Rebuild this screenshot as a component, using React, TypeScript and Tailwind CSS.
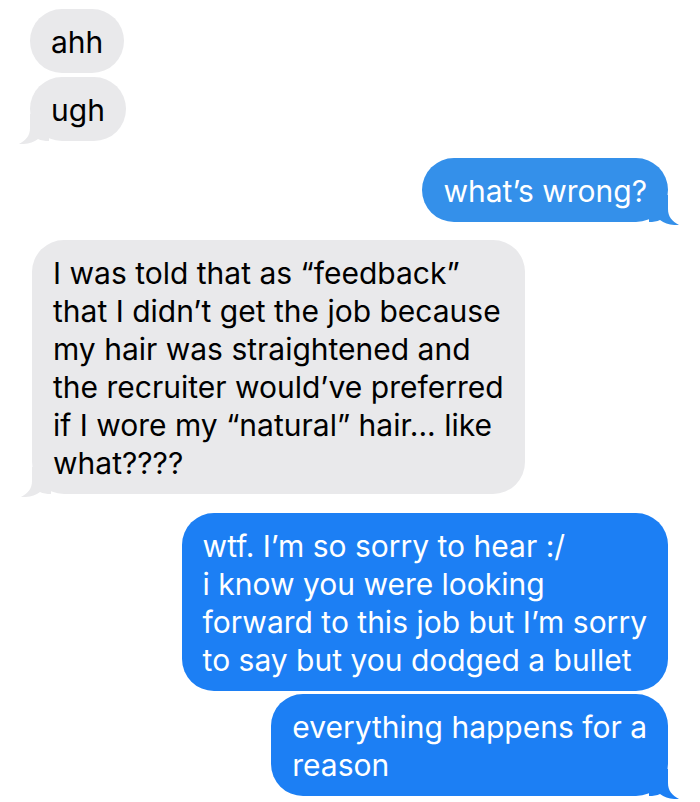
import React from "react";

type Msg = { from: "them" | "me"; lines: string[]; tail?: boolean; tone?: "light" | "dark" };

const messages: Msg[] = [
  { from: "them", lines: ["ahh"] },
  { from: "them", lines: ["ugh"], tail: true },
  { from: "me", lines: ["what’s wrong?"], tail: true, tone: "light" },
  {
    from: "them",
    lines: [
      "I was told that as “feedback”",
      "that I didn’t get the job because",
      "my hair was straightened and",
      "the recruiter would’ve preferred",
      "if I wore my “natural” hair... like",
      "what????",
    ],
    tail: true,
  },
  {
    from: "me",
    lines: [
      "wtf. I’m so sorry to hear :/",
      "i know you were looking",
      "forward to this job but I’m sorry",
      "to say but you dodged a bullet",
    ],
  },
  { from: "me", lines: ["everything happens for a", "reason"], tail: true },
];

function Tail({ color, side }: { color: string; side: "left" | "right" }) {
  return (
    <svg
      width="30"
      height="30"
      viewBox="0 0 30 30"
      className={
        side === "left"
          ? "absolute left-[-11px] bottom-[-3px]"
          : "absolute right-[-11px] bottom-[-3px] -scale-x-100"
      }
    >
      <path
        d="M11 0 L11 14 C11 22 7 26 0 30 C8 30.5 14 28.5 19 25 C22 26.5 26 27 30 27 L30 0 Z"
        fill={color}
      />
    </svg>
  );
}

function Bubble({ msg }: { msg: Msg }) {
  const mine = msg.from === "me";
  const color = mine ? (msg.tone === "light" ? "#3490ea" : "#1c7ff4") : "#e9e9eb";
  return (
    <div
      className={`relative rounded-[32px] pt-[14px] pb-[12px] px-[21px] ${
        mine ? "text-white" : "text-black"
      }`}
      style={{ backgroundColor: color }}
    >
      {msg.tail && <Tail color={color} side={mine ? "right" : "left"} />}
      <p className="relative text-[30px] leading-[38px] whitespace-nowrap">
        {msg.lines.map((l, i) => (
          <span key={i} className="block">
            {l}
          </span>
        ))}
      </p>
    </div>
  );
}

export default function App() {
  return (
    <div className="w-[700px] h-[802px] bg-white overflow-hidden pt-[9px] flex flex-col font-['Inter',sans-serif]">
      <div className="flex flex-col items-start gap-[4px] ml-[30px]">
        <Bubble msg={messages[0]} />
        <Bubble msg={messages[1]} />
      </div>
      <div className="flex flex-col items-end mr-[32px] mt-[17px]">
        <Bubble msg={messages[2]} />
      </div>
      <div className="flex flex-col items-start ml-[32px] mt-[18px]">
        <Bubble msg={messages[3]} />
      </div>
      <div className="flex flex-col items-end gap-[3px] mr-[32px] mt-[19px]">
        <Bubble msg={messages[4]} />
        <Bubble msg={messages[5]} />
      </div>
    </div>
  );
}
